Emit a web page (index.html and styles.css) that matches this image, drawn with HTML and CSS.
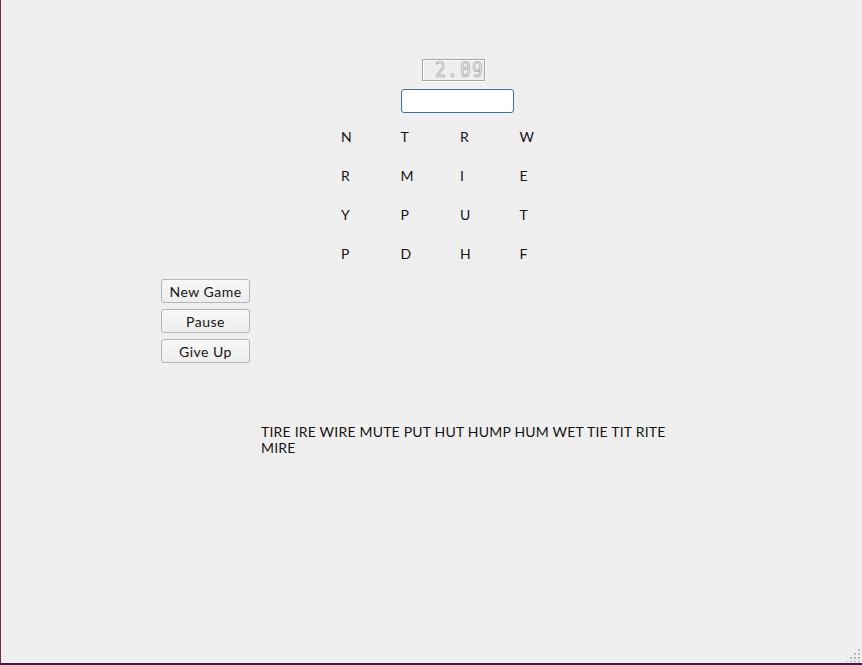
FILE: index.html
```html
<!DOCTYPE html>
<html>
<head>
<meta charset="utf-8">
<link rel="stylesheet" href="styles.css">
</head>
<body>
<div class="window">
  <div class="lcd"><span class="lcd-digit">2</span><span class="lcd-dot">.</span><span class="lcd-digit">0</span><span class="lcd-digit">9</span></div>
  <div class="entry"></div>
  <div class="board">
    <span>N</span><span>T</span><span>R</span><span>W</span>
    <span>R</span><span>M</span><span>I</span><span>E</span>
    <span>Y</span><span>P</span><span>U</span><span>T</span>
    <span>P</span><span>D</span><span>H</span><span>F</span>
  </div>
  <div class="buttons">
    <button class="btn">New Game</button>
    <button class="btn">Pause</button>
    <button class="btn">Give Up</button>
  </div>
  <div class="words">TIRE IRE WIRE MUTE PUT HUT HUMP HUM WET TIE TIT RITE MIRE</div>
  <svg class="grip" width="14" height="14" viewBox="0 0 14 14">
    <g fill="#b4b4b4">
      <rect x="11" y="1" width="2" height="2"/>
      <rect x="7" y="5" width="2" height="2"/><rect x="11" y="5" width="2" height="2"/>
      <rect x="3" y="9" width="2" height="2"/><rect x="7" y="9" width="2" height="2"/><rect x="11" y="9" width="2" height="2"/>
      <rect x="-1" y="13" width="2" height="2"/><rect x="3" y="13" width="2" height="2"/><rect x="7" y="13" width="2" height="2"/><rect x="11" y="13" width="2" height="2"/>
    </g>
  </svg>
</div>
</body>
</html>
```

FILE: styles.css
```css
html, body {
  margin: 0;
  padding: 0;
  background: #efefef;
}
.window {
  position: relative;
  box-sizing: border-box;
  width: 862px;
  height: 665px;
  background: #efefef;
  border-left: 1px solid #7a2646;
  border-bottom: 2px solid #520d50;
  padding-top: 59px;
  font-family: "Lato", "DejaVu Sans", sans-serif;
  font-size: 14px;
  letter-spacing: 0.2px;
  color: #141414;
  display: flex;
  flex-direction: column;
  align-items: flex-start;
}
.lcd {
  margin-left: 421px;
  width: 63px;
  height: 22px;
  box-sizing: border-box;
  border: 1px solid #a6a6a6;
  box-shadow: inset 1px 1px 0 #ffffff, 1px 1px 0 #ffffff;
  display: flex;
  justify-content: flex-end;
  align-items: center;
  padding-right: 1px;
  overflow: hidden;
}
.lcd-digit, .lcd-dot {
  font-family: "DejaVu Sans Mono", monospace;
  font-size: 21px;
  line-height: 20px;
  letter-spacing: 0;
  color: transparent;
  -webkit-text-stroke: 0.7px #a0a0a0;
  display: inline-block;
  text-align: center;
  transform: scaleX(0.85);
}
.lcd-digit {
  width: 12px;
}
.lcd-dot {
  width: 13px;
}
.entry {
  margin-top: 8px;
  margin-left: 400px;
  width: 113px;
  height: 24px;
  box-sizing: border-box;
  background: #ffffff;
  border: 1px solid #3d6f9e;
  border-radius: 3px;
}
.board {
  margin-top: 4px;
  margin-left: 340px;
  display: grid;
  grid-template-columns: repeat(4, 59.5px);
  grid-auto-rows: 39px;
  line-height: 39px;
  letter-spacing: 0;
}
.buttons {
  margin-top: 6px;
  margin-left: 160px;
  display: flex;
  flex-direction: column;
  gap: 6px;
}
.btn {
  width: 89px;
  height: 24px;
  box-sizing: border-box;
  border: 1px solid #b5b5b5;
  border-radius: 3px;
  background: linear-gradient(#f8f8f8, #ededed);
  font-family: "Lato", "DejaVu Sans", sans-serif;
  font-size: 14px;
  letter-spacing: 0.5px;
  color: #141414;
  padding: 0;
}
.words {
  margin-top: 61px;
  margin-left: 260px;
  width: 425px;
  line-height: 16px;
}
.grip {
  position: absolute;
  right: 1px;
  bottom: 1px;
}
```
